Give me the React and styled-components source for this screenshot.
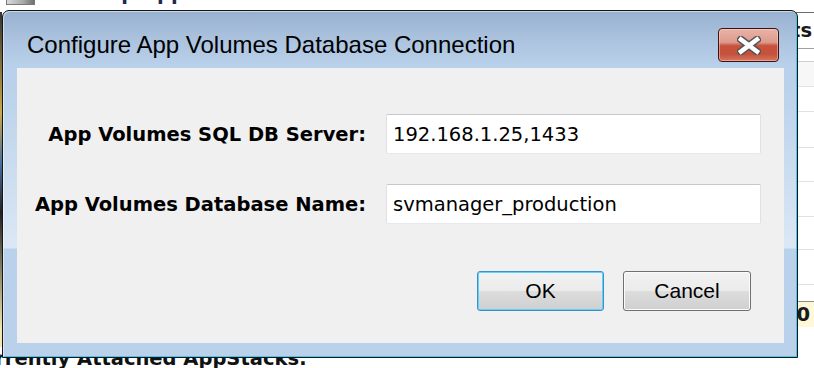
import React from 'react';
import styled, { createGlobalStyle } from 'styled-components';

const Global = createGlobalStyle`
  html, body { margin: 0; padding: 0; background: #fff; overflow: hidden; }
  #root { width: 814px; height: 368px; }
`;

const Desktop = styled.div`
  position: relative;
  width: 814px;
  height: 368px;
  overflow: hidden;
  background: #fff;
  display: flex;
  flex-direction: column;
  font-family: "DejaVu Sans", sans-serif;
`;

/* ---------- background application (mostly hidden) ---------- */
const AppTop = styled.div`
  height: 12px;
  flex: none;
  display: flex;
  align-items: flex-start;
  gap: 6px;
  padding-left: 6px;
  overflow: hidden;
`;

const AppIcon = styled.div`
  width: 29px;
  height: 22px;
  margin-top: -17px;
  border: 1px solid #7a7a7a;
  box-sizing: border-box;
  background: linear-gradient(to right, #d8d8d8, #a9a9a9 60%, #6f6f6f);
`;

const AppTitle = styled.div`
  margin-top: -18px;
  font-weight: bold;
  font-size: 19.5px;
  color: #1d2a4a;
  white-space: nowrap;
`;

const AppBody = styled.div`
  flex: 1;
  display: flex;
  min-height: 0;
`;

const LeftEdge = styled.div`
  width: 2px;
  background: linear-gradient(to bottom, #333 0%, #c9a94a 30%, #4a6fa0 45%, #222 60%, #f1e9b0 95%);
`;

const Main = styled.div`
  flex: 1;
  background: #fff;
`;

const SideList = styled.div`
  width: 60px;
  border-top: 1px solid #6d6d6d;
  display: flex;
  flex-direction: column;
`;

const SideRow = styled.div`
  height: ${(p) => p.$h}px;
  flex: none;
  box-sizing: border-box;
  border-bottom: 1px solid ${(p) => p.$line || '#e1e1e1'};
  background: ${(p) => p.$bg || '#fff'};
  display: flex;
  align-items: center;
  justify-content: flex-end;
  padding-right: ${(p) => p.$pr || 4}px;
  font-size: 19.5px;
  font-weight: bold;
  color: #1a1a1a;
  white-space: nowrap;
`;

const AppHeading = styled.div`
  height: 21px;
  flex: none;
  overflow: hidden;
  margin-left: -33px;
  font-weight: bold;
  font-size: 19.5px;
  line-height: normal;
  color: #111;
  white-space: nowrap;
`;

/* ---------- dialog window ---------- */
const Window = styled.div`
  position: absolute;
  left: 2px;
  top: 10px;
  width: 796px;
  height: 348px;
  box-sizing: border-box;
  border: 1px solid #151515;
  border-radius: 7px 7px 0 0;
  background: linear-gradient(
    to bottom,
    #98b1d0 0px,
    #adc5e0 32px,
    #b9d1ea 57px,
    #b9d1ea 72px,
    #dbe7f4 237px,
    #b9d1ea 238px,
    #b9d1ea 100%
  );
  box-shadow: inset 1px 1px 0 rgba(255, 255, 255, 0.5), inset -1px -1px 0 #3ccaf0;
  display: flex;
  flex-direction: column;
`;

const TitleBar = styled.div`
  height: 57px;
  flex: none;
  display: flex;
  align-items: flex-start;
  padding-left: 24px;
`;

const Title = styled.div`
  margin-top: 22px;
  font-family: "Liberation Sans", Arial, sans-serif;
  font-size: 24px;
  line-height: 24px;
  color: #000;
  white-space: nowrap;
`;

const CloseButton = styled.div`
  margin-left: auto;
  margin-top: 17px;
  margin-right: 18px;
  width: 61px;
  height: 34px;
  box-sizing: border-box;
  border: 1px solid #3f1212;
  border-radius: 4px;
  background: linear-gradient(
    to bottom,
    #e9b3a8 0%,
    #dc9a8c 42%,
    #c7533d 52%,
    #c4513b 78%,
    #d5775f 100%
  );
  box-shadow: inset 0 0 0 1px rgba(255, 220, 210, 0.45);
  display: flex;
  align-items: center;
  justify-content: center;
`;

const Client = styled.div`
  flex: 1;
  margin: 0 13px 14px 14px;
  background: #f0f0f0;
  padding: 46px 0 0 16px;
  display: flex;
  flex-direction: column;
`;

const Form = styled.div`
  display: grid;
  grid-template-columns: 333px 375px;
  column-gap: 20px;
  row-gap: 30px;
  align-items: center;
`;

const Label = styled.label`
  text-align: right;
  font-family: "DejaVu Sans", sans-serif;
  font-weight: bold;
  font-size: 19.5px;
  color: #000;
  white-space: nowrap;
`;

const TextBox = styled.input`
  height: 40px;
  width: 375px;
  box-sizing: border-box;
  margin: 0;
  border: 1px solid;
  border-color: #c6c8cd #dfe1e5 #e6e8eb #dfe1e5;
  border-radius: 2px;
  background: #fff;
  padding: 0 0 0 6px;
  font-family: "DejaVu Sans", sans-serif;
  font-size: 19.5px;
  color: #000;
  outline: none;
`;

const ButtonRow = styled.div`
  margin-top: 47px;
  display: flex;
  justify-content: flex-end;
  gap: 19px;
  padding-right: 33px;
`;

const Button = styled.button`
  width: ${(p) => p.$w}px;
  height: 40px;
  box-sizing: border-box;
  margin: 0;
  padding: 0;
  border: 1px solid ${(p) => (p.$primary ? '#3b8fcc' : '#707070')};
  border-radius: 3px;
  background: linear-gradient(to bottom, #f2f2f2 0%, #ebebeb 49%, #dddddd 50%, #cfcfcf 100%);
  box-shadow: inset 0 0 0 1px ${(p) => (p.$primary ? '#5fd3f7' : '#fbfbfb')};
  font-family: "Liberation Sans", Arial, sans-serif;
  font-size: 21px;
  color: #000;
  cursor: default;
`;

function CloseGlyph() {
  return (
    <svg width="24" height="19" viewBox="0 0 24 19">
      <g strokeLinecap="square">
        <path d="M4 3.5 L20 15.5 M20 3.5 L4 15.5" stroke="#545454" strokeWidth="7.5" />
        <path d="M4 3.5 L20 15.5 M20 3.5 L4 15.5" stroke="#ffffff" strokeWidth="4.5" />
      </g>
    </svg>
  );
}

export default function App() {
  const sideRows = [
    { h: 36, line: '#a0a0a0', text: 'Hosts', pr: 2 },
    { h: 13, line: '#d0d0d0' },
    { h: 25, line: '#e4e4e4', bg: '#f7f7f7' },
    { h: 25 },
    { h: 36 },
    { h: 34 },
    { h: 35 },
    { h: 33 },
    { h: 35 },
    { h: 17, line: '#8d8d8d' },
    { h: 26, line: '#fff', bg: '#fff7d6', text: '0', pr: 4 },
  ];

  return (
    <>
      <Global />
      <Desktop>
        <AppTop>
          <AppIcon />
          <AppTitle>IT Group Application</AppTitle>
        </AppTop>
        <AppBody>
          <LeftEdge />
          <Main />
          <SideList>
            {sideRows.map((r, i) => (
              <SideRow key={i} $h={r.h} $line={r.line} $bg={r.bg} $pr={r.pr}>
                {r.text}
              </SideRow>
            ))}
          </SideList>
        </AppBody>
        <AppHeading>Currently Attached AppStacks:</AppHeading>

        <Window>
          <TitleBar>
            <Title>Configure App Volumes Database Connection</Title>
            <CloseButton>
              <CloseGlyph />
            </CloseButton>
          </TitleBar>
          <Client>
            <Form>
              <Label htmlFor="srv">App Volumes SQL DB Server:</Label>
              <TextBox id="srv" type="text" defaultValue="192.168.1.25,1433" readOnly />
              <Label htmlFor="db">App Volumes Database Name:</Label>
              <TextBox id="db" type="text" defaultValue="svmanager_production" readOnly />
            </Form>
            <ButtonRow>
              <Button $primary $w={127}>OK</Button>
              <Button $w={128}>Cancel</Button>
            </ButtonRow>
          </Client>
        </Window>
      </Desktop>
    </>
  );
}
